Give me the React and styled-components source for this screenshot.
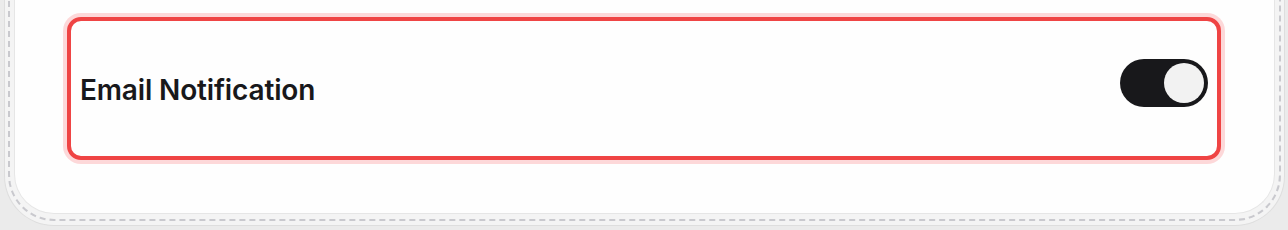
import React, { useState } from 'react';
import styled, { createGlobalStyle } from 'styled-components';

const GlobalStyle = createGlobalStyle`
  html, body {
    margin: 0;
    padding: 0;
    background: #ebebeb;
  }
  * {
    box-sizing: border-box;
  }
`;

const Page = styled.div`
  width: 1288px;
  height: 230px;
  overflow: hidden;
  display: flex;
  flex-direction: column;
  justify-content: flex-end;
  padding: 0 3px 4px 4px;
  background: #ebebeb;
`;

/* light outer rim around the stitched edge */
const CardFrame = styled.div`
  border: 1px solid #dedede;
  border-top: none;
  background: #f4f4f4;
  padding: 0 3px 4px 3px;
  border-radius: 0 0 50px 50px;
`;

const Stitch = styled.div`
  border: 2px dashed #c9c9ce;
  border-top: none;
  border-radius: 0 0 46px 46px;
  padding: 0 4px 5px 4px;
`;

const Card = styled.div`
  background: #fefefe;
  border: 1px solid #e6e6e6;
  border-top: none;
  border-radius: 0 0 40px 40px;
  padding: 200px 53px 53px 52px;
`;

const SettingRow = styled.div`
  height: 143px;
  display: flex;
  align-items: center;
  justify-content: space-between;
  padding: 0 9px 0 9px;
  border: 4px solid #ef4444;
  border-radius: 14px;
  box-shadow: 0 0 0 4px #fdd8d9;
  background: #fefefe;
`;

const Label = styled.span`
  font-family: Inter, "Noto Sans", sans-serif;
  font-weight: 600;
  font-size: 28px;
  color: #18181b;
  letter-spacing: -0.15px;
  margin-top: 2px;
`;

const Toggle = styled.button`
  width: 88px;
  height: 48px;
  border: none;
  border-radius: 24px;
  padding: 4px;
  background: ${p => (p.$on ? '#18181b' : '#d4d4d8')};
  display: flex;
  justify-content: ${p => (p.$on ? 'flex-end' : 'flex-start')};
  align-items: center;
  cursor: pointer;
  margin-top: -11px;
`;

const Knob = styled.span`
  width: 40px;
  height: 40px;
  border-radius: 50%;
  background: #f2f2f2;
`;

export default function App() {
  const [on, setOn] = useState(true);
  return (
    <>
      <GlobalStyle />
      <Page>
        <CardFrame>
          <Stitch>
            <Card>
              <SettingRow>
                <Label>Email Notification</Label>
                <Toggle $on={on} onClick={() => setOn(!on)} aria-label="Email Notification">
                  <Knob />
                </Toggle>
              </SettingRow>
            </Card>
          </Stitch>
        </CardFrame>
      </Page>
    </>
  );
}
